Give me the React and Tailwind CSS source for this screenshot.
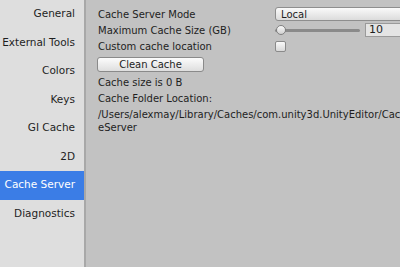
import React from "react";

const items = ["General", "External Tools", "Colors", "Keys", "GI Cache", "2D", "Cache Server", "Diagnostics"];

export default function App() {
  return (
    <div className="w-[400px] h-[267px] flex overflow-hidden text-[#1e1e1e] text-[10px]" style={{ fontFamily: '"DejaVu Sans", sans-serif' }}>
      <div className="w-[84px] shrink-0 bg-[#dedede] flex flex-col text-[10.5px]">
        {items.map((t) => (
          <div key={t} className={"h-[28.5px] flex items-center justify-end pr-[9px] whitespace-nowrap " + (t === "Cache Server" ? "bg-[#3b7de6] text-white" : "")}>
            {t}
          </div>
        ))}
      </div>
      <div className="w-[2px] shrink-0 bg-[#a8a8a8]" />
      <div className="flex-1 bg-[#c2c2c2] pl-[12px] pt-[6px] flex flex-col min-w-0 overflow-hidden">
        <div className="flex items-center h-[16px]">
          <div className="w-[177px] shrink-0">Cache Server Mode</div>
          <div className="flex-1 h-[14px] rounded-[3px] border border-[#8e8e8e] bg-gradient-to-b from-[#fafafa] to-[#dcdcdc] pl-[5px] flex items-center -mr-[10px]">Local</div>
        </div>
        <div className="flex items-center h-[16px]">
          <div className="w-[177px] shrink-0">Maximum Cache Size (GB)</div>
          <div className="w-[85px] relative h-[12px] flex items-center">
            <div className="w-full h-[3px] rounded bg-[#8a8a8a]" />
            <div className="absolute left-[1px] w-[10px] h-[10px] rounded-full border border-[#808080] bg-gradient-to-b from-[#fafafa] to-[#d0d0d0]" />
          </div>
          <div className="ml-[5px] flex-1 h-[14px] border border-[#9a9a9a] bg-[#e4e4e4] pl-[3px] flex items-center -mr-[10px] text-[11px]">10</div>
        </div>
        <div className="flex items-center h-[16px]">
          <div className="w-[177px] shrink-0">Custom cache location</div>
          <div className="w-[11px] h-[11px] rounded-[2px] border border-[#8a8a8a] bg-gradient-to-b from-[#fafafa] to-[#d8d8d8]" />
        </div>
        <div className="mt-[3px] w-[107px] h-[15px] rounded-[3px] border border-[#8a8a8a] bg-gradient-to-b from-[#fcfcfc] to-[#dedede] flex items-center justify-center -ml-[1px]">Clean Cache</div>
        <div className="h-[16px] flex items-center mt-[2px]">Cache size is 0 B</div>
        <div className="h-[16px] flex items-center">Cache Folder Location:</div>
        <div className="h-[14px] mt-[1px] flex items-center whitespace-nowrap">/Users/alexmay/Library/Caches/com.unity3d.UnityEditor/Cach</div>
        <div className="h-[12px] flex items-center">eServer</div>
      </div>
    </div>
  );
}
